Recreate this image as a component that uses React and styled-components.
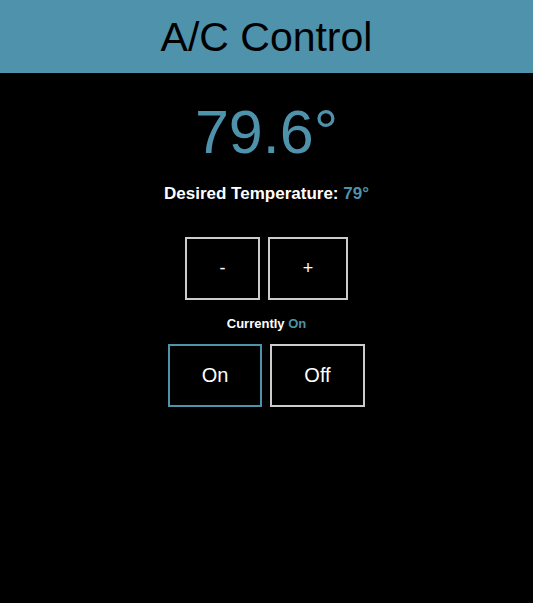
import React, { useState } from 'react';
import styled, { createGlobalStyle } from 'styled-components';

const GlobalStyle = createGlobalStyle`
  html, body {
    margin: 0;
    padding: 0;
    background: #000;
    font-family: "Liberation Sans", Arial, sans-serif;
  }
`;

const Page = styled.div`
  min-height: 603px;
  background: #000;
  color: #fff;
  display: flex;
  flex-direction: column;
  align-items: center;
`;

const Header = styled.header`
  width: 100%;
  height: 73px;
  background: #4f92ab;
  display: flex;
  align-items: center;
  justify-content: center;
`;

const Title = styled.h1`
  margin: 0;
  padding-top: 2px;
  font-size: 41px;
  font-weight: 400;
  color: #000;
`;

const Current = styled.div`
  margin-top: 26px;
  font-size: 61px;
  line-height: 66px;
  color: #4f92ab;
`;

const Desired = styled.div`
  margin-top: 19px;
  font-size: 17px;
  font-weight: 700;
`;

const Accent = styled.span`
  color: #4f92ab;
`;

const Row = styled.div`
  display: flex;
  gap: ${p => p.gap}px;
  margin-top: ${p => p.top}px;
`;

const Box = styled.button`
  width: ${p => p.w}px;
  height: 63px;
  background: #000;
  color: #fff;
  border: 2px solid ${p => (p.active ? '#4f92ab' : '#cccccc')};
  font-family: inherit;
  font-size: ${p => p.size}px;
  padding: 0;
  cursor: pointer;
`;

const Status = styled.div`
  margin-top: 16px;
  font-size: 13px;
  font-weight: 700;
`;

export default function App() {
  const [desired, setDesired] = useState(79);
  const [on, setOn] = useState(true);
  return (
    <>
      <GlobalStyle />
      <Page>
        <Header>
          <Title>A/C Control</Title>
        </Header>
        <Current>79.6°</Current>
        <Desired>
          Desired Temperature: <Accent>{desired}°</Accent>
        </Desired>
        <Row gap={8} top={33}>
          <Box w={75} size={18} onClick={() => setDesired(desired - 1)}>-</Box>
          <Box w={80} size={18} onClick={() => setDesired(desired + 1)}>+</Box>
        </Row>
        <Status>
          Currently <Accent>{on ? 'On' : 'Off'}</Accent>
        </Status>
        <Row gap={8} top={13}>
          <Box w={94} size={20} active={on} onClick={() => setOn(true)}>On</Box>
          <Box w={95} size={20} active={!on} onClick={() => setOn(false)}>Off</Box>
        </Row>
      </Page>
    </>
  );
}
